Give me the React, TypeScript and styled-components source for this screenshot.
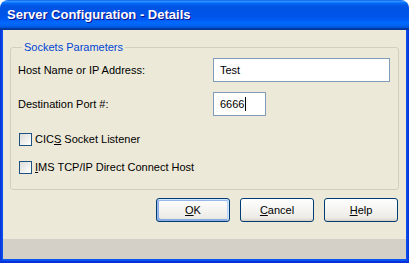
import React, { FC } from 'react';
import styled, { createGlobalStyle } from 'styled-components';

const GlobalStyle = createGlobalStyle`
    html, body {
        margin: 0;
        padding: 0;
        background: #ffffff;
    }
    * {
        box-sizing: border-box;
    }
`;

const Window = styled.div`
    width: 409px;
    height: 263px;
    display: flex;
    flex-direction: column;
    border-radius: 8px 8px 0 0;
    overflow: hidden;
    font-family: 'Liberation Sans', Arial, sans-serif;
    font-size: 11px;
    color: #000;
`;

const TitleBar = styled.div`
    height: 30px;
    flex: none;
    display: flex;
    align-items: center;
    padding: 0 0 1px 7px;
    background: linear-gradient(
        180deg,
        #0058ee 0%,
        #3593ff 4%,
        #288eff 6%,
        #127dff 8%,
        #036ffc 10%,
        #0262ee 14%,
        #0057e5 20%,
        #0054e3 24%,
        #0055eb 56%,
        #005bf5 66%,
        #026afe 76%,
        #0062ef 86%,
        #0052d6 92%,
        #0040ab 94%,
        #003092 100%
    );
    color: #fff;
    font-family: 'Liberation Sans', Arial, sans-serif;
    font-weight: bold;
    font-size: 13px;
    text-shadow: 1px 1px #0f1089;
`;

const Frame = styled.div`
    flex: 1;
    display: flex;
    padding: 0 3px 4px 3px;
    background: linear-gradient(90deg, #0831d9 0, #0a55ef 3px, #0a55ef calc(100% - 3px), #0831d9 100%);
    box-shadow: inset 0 -2px #0831d9;
`;

const Client = styled.div`
    flex: 1;
    display: flex;
    flex-direction: column;
    background: #ece9d8;
`;

const Content = styled.div`
    flex: 1;
    padding: 11px 7px 0 7px;
`;

const StatusStrip = styled.div`
    height: 20px;
    flex: none;
    background: #d4d0c8;
`;

const GroupBox = styled.fieldset`
    margin: 0;
    height: 149px;
    padding: 3px 7px 0 7px;
    border: 1px solid #d0d0bf;
    border-radius: 3px;
`;

const Legend = styled.legend`
    color: #0046d5;
    padding: 0 2px;
    margin-left: 4px;
    line-height: 13px;
`;

const FieldGrid = styled.div`
    display: grid;
    grid-template-columns: 195px 1fr;
    row-gap: 10px;
    align-items: center;
    padding-top: 1px;
`;

const FieldLabel = styled.label`
    line-height: 13px;
`;

const TextBox = styled.div<{ $width: number }>`
    width: ${p => p.$width}px;
    height: 24px;
    display: flex;
    align-items: center;
    padding-left: 6px;
    background: #fff;
    border: 1px solid #7f9db9;
`;

const Caret = styled.span`
    display: inline-block;
    width: 1px;
    height: 14px;
    margin-left: 1px;
    background: #000;
`;

const CheckList = styled.div`
    display: flex;
    flex-direction: column;
    gap: 14px;
    padding: 16px 0 0 1px;
`;

const CheckRow = styled.div`
    display: flex;
    align-items: center;
    gap: 3px;
    height: 14px;
`;

const CheckBox = styled.span`
    width: 13px;
    height: 13px;
    flex: none;
    border: 1px solid #1c5180;
    background: linear-gradient(135deg, #dcdcd7 0%, #fff 100%);
`;

const ButtonRow = styled.div`
    display: flex;
    justify-content: flex-end;
    gap: 10px;
    padding: 8px 1px 0 0;
`;

const Button = styled.button<{ $default?: boolean }>`
    width: 74px;
    height: 24px;
    padding: 0;
    font-family: inherit;
    font-size: 11px;
    color: #000;
    border: 1px solid #003c74;
    border-radius: 3px;
    background: linear-gradient(180deg, #fff 0%, #ecebe6 86%, #d6d0c5 100%);
    box-shadow: ${p =>
        p.$default
            ? 'inset -1px 1px #cee7ff, inset 1px 2px #98b8ea, inset -2px 2px #bcd4f6, inset 1px -1px #89ade4, inset 2px -2px #89ade4'
            : 'none'};
`;

const Key = styled.u`
    text-decoration: underline;
`;

const App: FC = () => {
    return (
        <>
            <GlobalStyle />
            <Window>
                <TitleBar>Server Configuration - Details</TitleBar>
                <Frame>
                    <Client>
                        <Content>
                            <GroupBox>
                                <Legend>Sockets Parameters</Legend>
                                <FieldGrid>
                                    <FieldLabel>Host Name or IP Address:</FieldLabel>
                                    <TextBox $width={177}>Test</TextBox>
                                    <FieldLabel>Destination Port #:</FieldLabel>
                                    <TextBox $width={53}>
                                        6666
                                        <Caret />
                                    </TextBox>
                                </FieldGrid>
                                <CheckList>
                                    <CheckRow>
                                        <CheckBox />
                                        <span>
                                            CIC<Key>S</Key> Socket Listener
                                        </span>
                                    </CheckRow>
                                    <CheckRow>
                                        <CheckBox />
                                        <span>
                                            <Key>I</Key>MS TCP/IP Direct Connect Host
                                        </span>
                                    </CheckRow>
                                </CheckList>
                            </GroupBox>
                            <ButtonRow>
                                <Button $default>
                                    <Key>O</Key>K
                                </Button>
                                <Button>
                                    <Key>C</Key>ancel
                                </Button>
                                <Button>
                                    <Key>H</Key>elp
                                </Button>
                            </ButtonRow>
                        </Content>
                        <StatusStrip />
                    </Client>
                </Frame>
            </Window>
        </>
    );
};

export default App;
